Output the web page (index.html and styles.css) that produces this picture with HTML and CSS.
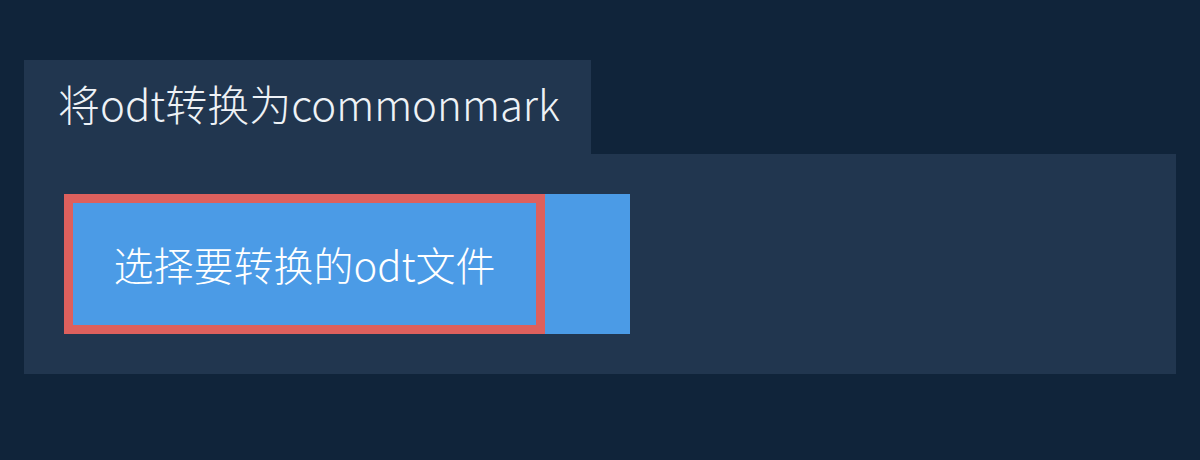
FILE: index.html
```html
<!DOCTYPE html>
<html lang="zh">
<head>
<meta charset="utf-8">
<link rel="stylesheet" href="styles.css">
</head>
<body>
<div class="wrap">
  <div class="tab"><h1 class="title">将odt转换为commonmark</h1></div>
  <div class="panel">
    <div class="picker">
      <button class="choose">选择要转换的odt文件</button>
      <div class="more"></div>
    </div>
  </div>
</div>
</body>
</html>
```
FILE: styles.css
```css
html, body { margin: 0; padding: 0; }
body {
  background: #10243a;
  width: 1200px;
  height: 460px;
  font-family: "Noto Sans CJK SC", "Noto Sans", sans-serif;
  color: #eef2f6;
}
.wrap { padding: 60px 24px 0; }
.tab {
  display: inline-block;
  background: #21364f;
  height: 94px;
  width: 567px;
  box-sizing: border-box;
  padding-left: 34px;
}
.title {
  margin: 0;
  font-weight: 300;
  font-size: 42px;
  line-height: 86px;
}
.panel {
  background: #21364f;
  padding: 40px;
  height: 220px;
  box-sizing: border-box;
}
.picker { display: flex; height: 140px; }
.choose {
  background: #4b9be6;
  border: 9px solid #dd605d;
  color: #fff;
  font-family: inherit;
  font-weight: 300;
  font-size: 40px;
  width: 481px;
  padding: 0;
  margin: 0;
}
.more { background: #4b9be6; width: 85px; }
```
